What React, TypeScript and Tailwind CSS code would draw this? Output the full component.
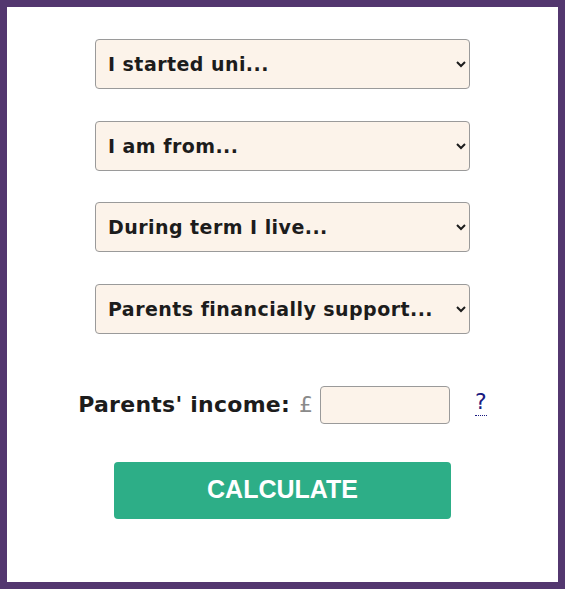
import React from "react";

const options = [
  "I started uni...",
  "I am from...",
  "During term I live...",
  "Parents financially support...",
];

export default function App() {
  return (
    <div className="min-h-[589px] w-[565px] border-[7px] border-[#53376f] bg-white font-['DejaVu_Sans',sans-serif]">
      <div className="flex flex-col items-center pt-[32px] pb-[62px]">
        {/* dropdowns */}
        <div className="flex flex-col gap-[31.5px]">
          {options.map((label) => (
            <select
              key={label}
              defaultValue=""
              className="h-[50px] w-[375px] rounded-[4px] border border-[#9a9a9a] bg-[#fcf3ea] pl-[8px] pr-[8px] text-[19px] font-bold tracking-[0.45px] text-[#1c1c1c] outline-none"
            >
              <option value="" disabled>
                {label}
              </option>
            </select>
          ))}
        </div>

        {/* income row */}
        <div className="mt-[52px] flex items-center">
          <label className="text-[22px] font-bold tracking-[0.25px] text-[#1c1c1c]">
            Parents' income:
          </label>
          <span className="ml-[9px] text-[22px] text-[#8a8a8a]">£</span>
          <input
            type="text"
            className="ml-[7px] h-[38px] w-[130px] rounded-[4px] border border-[#9a9a9a] bg-[#fcf3ea] outline-none"
          />
          <span className="ml-[25px] -mt-[4px] border-b border-dotted border-[#1a1a80] text-[22px] leading-[26px] text-[#1a1a80]">
            ?
          </span>
        </div>

        {/* button */}
        <button className="mt-[38px] h-[57px] w-[337px] rounded-[4px] bg-[#2dae87] font-['Liberation_Sans',Arial,sans-serif] text-[25px] font-bold text-white">
          CALCULATE
        </button>
      </div>
    </div>
  );
}
